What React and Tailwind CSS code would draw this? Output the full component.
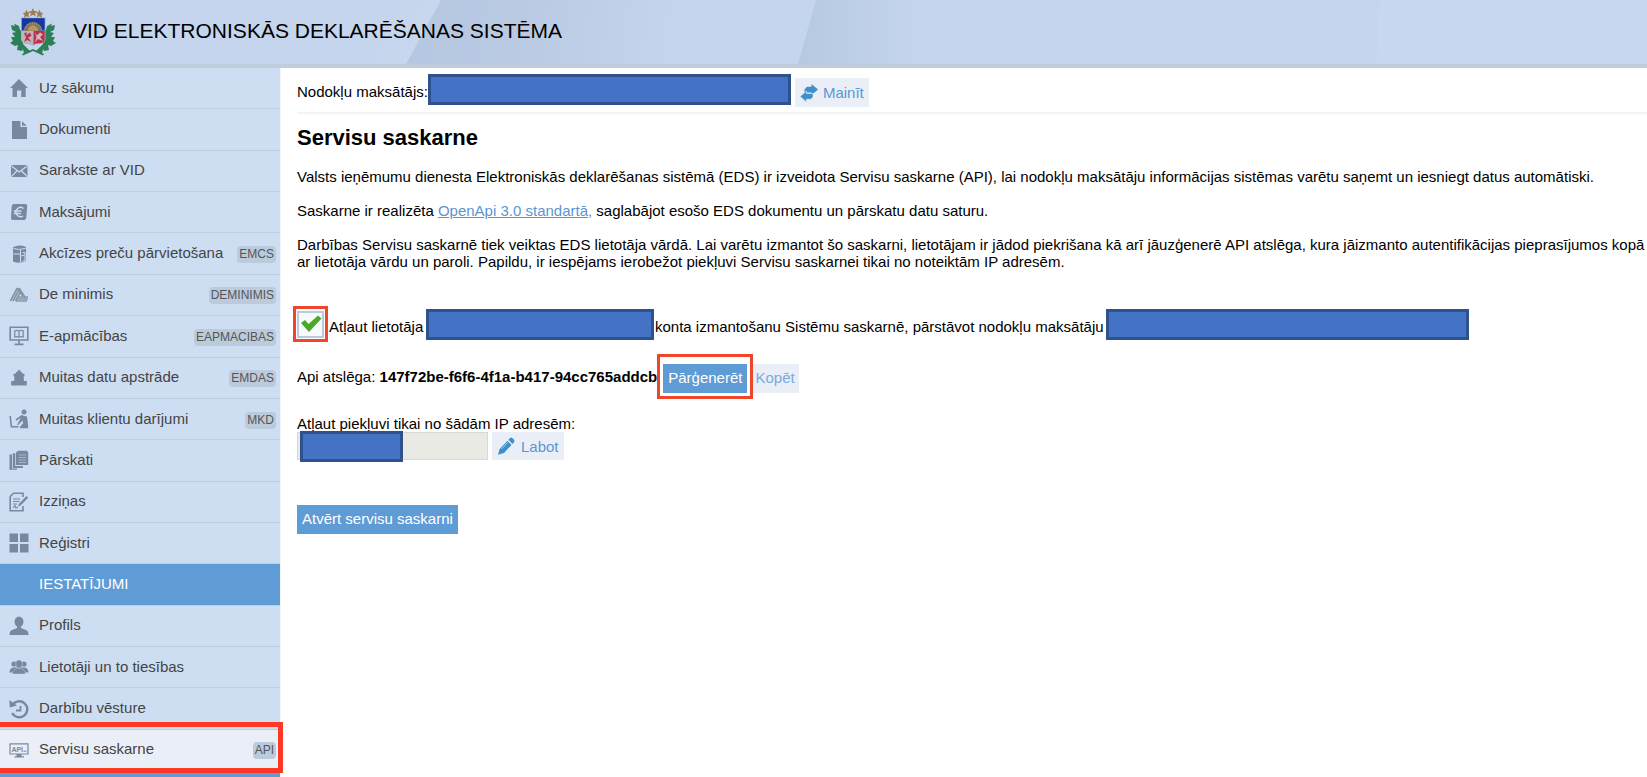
const ICON = '#78899f';

function Icon({ children }) {
  return (
    <svg viewBox="0 0 20 20" className="h-5 w-5 shrink-0" fill={ICON} stroke="none" aria-hidden="true">
      {children}
    </svg>
  );
}

const line = { fill: 'none', stroke: ICON, strokeWidth: 1.6 };
const gap = '#cddef3';

const icons = {
  home: <path d="M10 1 L19 10 H16.7 V19 H12.2 V12.5 H8 V19 H3.5 V10 H1 Z" />,
  doc: (
    <>
      <path d="M3 1 H11.5 V7 H18 V19 H3 Z" />
      <path d="M13 1.2 L17.8 5.8 H13 Z" />
    </>
  ),
  mail: (
    <>
      <rect x="2" y="4" width="16.5" height="12" rx="2" />
      <path d="M3 5.5 L10.2 11 L17.5 5.5 M3 14.8 L7.8 10 M17.5 14.8 L12.6 10" fill="none" stroke={gap} strokeWidth="1.2" />
    </>
  ),
  euro: (
    <>
      <path d="M5 2 H16.5 Q18.5 2 18.2 4 L17.3 15.5 Q17 18 14.8 18 H4 Q1.8 18 2 15.8 L2.7 4 Q3 2 5 2 Z" />
      <path d="M14.5 6.5 A4.6 4.6 0 1 0 14 14 M4.8 9 H12.5 M4.8 11.5 H12" fill="none" stroke={gap} strokeWidth="1.4" />
    </>
  ),
  barrel: (
    <>
      <path d="M4 3.2 Q10 0 17 3 V17.3 Q10 20 4 17.5 Z" />
      <path d="M4.5 4.6 Q10 6.4 16.5 4.4 M4.5 10 H11 M11.5 6 V18.5 M13.5 8.5 H16 V17 H13.5 M12 12 L15.5 11" fill="none" stroke={gap} strokeWidth="1" />
    </>
  ),
  triangle: (
    <g fill="none" stroke="#8996a6" strokeWidth="1.7">
      <path d="M1.5 16 L8 3.5 M4 16 L10 4.5 M6.5 16 L11 7.5 M8 3 L14.5 12 M10 3 L16.5 13 M9 12 H19 M8 14 H19 M7 16 H18" />
    </g>
  ),
  board: (
    <>
      <path d="M1.2 1.2 H18.8 V14 H1.2 Z" {...line} />
      <path d="M10 5 Q7.5 3.8 5.8 4.8 V11 Q8 10.2 10 11.3 Q12 10.2 14.2 11 V4.8 Q12.5 3.8 10 5 V11" fill="none" stroke={ICON} strokeWidth="1.2" />
      <path d="M10 14 V18 M5.5 18.4 H14.5" {...line} />
    </>
  ),
  stamp: (
    <path d="M9 2 H11 V3.3 Q13 3.5 13.5 5.5 L15.5 6 V8 L14.6 8.5 L15 13 H17.8 V17.5 H2.2 V13 H5.2 L5.4 8.5 L4.5 8 V6 L6.5 5.5 Q7 3.5 9 3.3 Z" />
  ),
  desk: (
    <>
      <circle cx="15" cy="3" r="2.5" />
      <path d="M13 6.5 L18 7.5 L19.3 18 H11 L14.2 14 L13.5 11.5 L9 16 H8 Z" />
      <path d="M1.2 7 L2.4 17.8 H9.5 M7 11 L13.5 6.5 M11 18.5 H19" {...line} />
    </>
  ),
  stack: (
    <>
      <path d="M9 .8 H18 L19.2 2.5 V15 H7 V2.5 Z" />
      <path d="M3.8 3.2 H6.3 V16 H14 V18 H3.8 Z M.5 4.6 H3 V18.6 H8 V19.8 H.5 Z" />
      <path d="M9.5 5 H17 M9.5 7.5 H17 M9.5 10 H17 M9.5 12.5 H17" fill="none" stroke={gap} strokeWidth=".5" />
    </>
  ),
  write: (
    <>
      <path d="M14 5 V1.2 H4.5 L1.2 4.5 V18.8 H14 V14" {...line} />
      <path d="M4 7 H11 M4 9.5 H10.5 M4 12 H8 M4 16 L6 13.5 L7 16 L9 15" fill="none" stroke={ICON} strokeWidth="1.1" />
      <path d="M17.5 4 L19.2 5.8 L11.5 13.5 L9.2 14.5 L9.8 12 Z" />
    </>
  ),
  grid: <path d="M.5 .5 H9 V9 H.5 Z M11 .5 H19.5 V9 H11 Z M.5 11 H9 V19.5 H.5 Z M11 11 H19.5 V19.5 H11 Z" />,
  user: (
    <>
      <ellipse cx="10" cy="5.8" rx="4.5" ry="5.3" />
      <path d="M8 10 H12 V12 L17.5 14.3 Q19.5 15.2 19.5 19 H.5 Q.5 15.2 2.5 14.3 L8 12 Z" />
    </>
  ),
  users: (
    <>
      <circle cx="5" cy="7" r="2.6" />
      <circle cx="15" cy="7" r="2.6" />
      <path d="M.5 15.5 Q.5 11.5 4 10.5 H16 Q19.5 11.5 19.5 15.5 Z" />
      <ellipse cx="10" cy="7" rx="3.4" ry="4" stroke={gap} strokeWidth=".4" />
      <path d="M3.5 17 Q3.5 13 8.5 11.5 H11.5 Q16.5 13 16.5 17 Z" stroke={gap} strokeWidth=".4" />
    </>
  ),
  history: (
    <>
      <path d="M3.5 6 A8 8 0 1 1 3.2 14" fill="none" stroke={ICON} strokeWidth="2.4" />
      <path d="M.3 1 L.8 8.5 L8 6.5 Z" />
      <path d="M11.5 7 V11.5 H7" fill="none" stroke={ICON} strokeWidth="1.8" />
    </>
  ),
  api: (
    <>
      <path d="M1 3.8 H19 V14 H1 Z" fill="none" stroke={ICON} strokeWidth="1.2" />
      <path d="M7.5 14 H12.5 V16.2 H15 V17.6 H5.5 V16.2 H7.5 Z" />
      <text x="2.4" y="11.6" fontSize="7" fontWeight="700" fontFamily="Liberation Sans, sans-serif">API</text>
      <path d="M14.5 11.2 H17.5" fill="none" stroke={ICON} strokeWidth="1" />
    </>
  ),
};

const menu = [
  { icon: 'home', label: 'Uz sākumu' },
  { icon: 'doc', label: 'Dokumenti' },
  { icon: 'mail', label: 'Sarakste ar VID' },
  { icon: 'euro', label: 'Maksājumi' },
  { icon: 'barrel', label: 'Akcīzes preču pārvietošana', tag: 'EMCS' },
  { icon: 'triangle', label: 'De minimis', tag: 'DEMINIMIS' },
  { icon: 'board', label: 'E-apmācības', tag: 'EAPMACIBAS' },
  { icon: 'stamp', label: 'Muitas datu apstrāde', tag: 'EMDAS' },
  { icon: 'desk', label: 'Muitas klientu darījumi', tag: 'MKD' },
  { icon: 'stack', label: 'Pārskati' },
  { icon: 'write', label: 'Izziņas' },
  { icon: 'grid', label: 'Reģistri' },
];

const settings = [
  { icon: 'user', label: 'Profils' },
  { icon: 'users', label: 'Lietotāji un to tiesības' },
  { icon: 'history', label: 'Darbību vēsture' },
  { icon: 'api', label: 'Servisu saskarne', tag: 'API', active: true },
];

function MenuItem({ icon, label, tag, active }) {
  return (
    <li className={`relative flex min-h-10 flex-1 border-b border-[#bccddd] ${active ? 'bg-[#eaeff7]' : ''}`}>
      <a href="#" className="flex flex-1 items-center pr-1 pl-[9px] text-[15px] text-[#444]">
        <Icon>{icons[icon]}</Icon>
        <span className="flex-1 pb-0.5 pl-2.5 whitespace-nowrap">{label}</span>
        {tag && (
          <span className="mt-0.5 rounded-sm bg-[#bccbdc] px-0.5 text-xs leading-[17px] text-[#555]">{tag}</span>
        )}
      </a>
      {active && (
        <span className="pointer-events-none absolute -top-2 -right-[3px] -bottom-[3px] -left-[5px] border-[5px] border-[#ff3826]" />
      )}
    </li>
  );
}

function Redacted({ className }) {
  return <span className={`block shrink-0 border-[3px] border-[#2f528f] bg-[#4472c4] ${className}`} />;
}

function Emblem() {
  return (
    <svg viewBox="0 0 46 48" className="h-12 w-[46px] shrink-0" role="img" aria-label="Latvijas ģerbonis">
      <g fill="#2c8058">
        <path d="M1 17 L5 18 L4 15.5 L9 18 L10 22 L13 24 V36 L20 43 L23 42 L26 43 L33 36 V24 L36 22 L37 18 L42 15.5 L41 18 L45 17 L44 22 L40 24 L44 25 L41 29 L45 29 L43 33 L46 35 L41 38 L38 37 L39 42 L34 43 L33 41 L32 46 L27 44 L23 42 L20 44 L14 46 L13 41 L12 43 L7 42 L8 37 L5 38 L0 35 L3 33 L1 29 L5 29 L2 25 L6 24 L2 22 Z" />
        <path d="M12 46 L23 41 L34 46 L33 47.5 L23 43 L13 47.5 Z" />
      </g>
      <path d="M11 9.5 H35.5 V31 Q35 36 29 36 Q25 36 23.2 38 Q21 36 17 36 Q11.5 36 11 31 Z" fill="#a9b0bb" />
      <path d="M11.8 10.2 H34.7 V22.5 H11.8 Z" fill="#1238a8" />
      <path d="M14 22.8 A9 9 0 0 1 32 22.8 Z" fill="#6f6d76" />
      <path d="M14.5 22.8 A8.6 8.6 0 0 1 31.5 22.8" fill="none" stroke="#a88d5a" strokeWidth="2" strokeDasharray="1.2 1" />
      <path d="M17.5 22.8 A5.5 5.5 0 0 1 28.5 22.8 Z" fill="#b8965c" />
      <path d="M11.8 23 H22.8 V36.8 Q21 35.3 17 35.3 Q12.3 35.3 11.8 31 Z" fill="#b9b7c0" />
      <path d="M23.6 23 H34.7 V31 Q34.2 35.3 29 35.3 Q25 35.3 23.6 36.6 Z" fill="#c02f47" />
      <path d="M14 25 L17 24.5 L16 27.5 L20 24.5 L21.5 28 L18 29.5 L21.5 34 L17.5 32 L14 34 L16 29.5 Z" fill="#c02f47" />
      <path d="M25 24.5 L27 27.5 L30 24.5 L33 26.5 L30 29 L33 33 L28 31 L25 34.5 L26.5 29.5 Z" fill="#cbbac4" />
      <g fill="#a07b4d">
        <path d="M23 0 L24.2 3 L27.5 3.2 L25 5.3 L25.9 8.5 L23 6.8 L20.1 8.5 L21 5.3 L18.5 3.2 L21.8 3 Z" />
        <path d="M16.5 1.5 L17.5 4 L20 4.6 L18.4 6.4 L19.2 9.3 L16.7 8.2 L14 10 L14.5 7 L12.8 5 L15.4 4.6 Z" />
        <path d="M29.5 1.5 L28.5 4 L26 4.6 L27.6 6.4 L26.8 9.3 L29.3 8.2 L32 10 L31.5 7 L33.2 5 L30.6 4.6 Z" />
      </g>
    </svg>
  );
}

export default function App() {
  return (
    <div className="flex min-h-screen flex-col overflow-hidden bg-white font-['Liberation_Sans',Arial,sans-serif] text-[15px] leading-[17px] text-black">
      <header className="relative border-b-4 border-[#bfcddc] bg-[#c4d5ed]">
        <svg className="absolute inset-0 h-full w-full" viewBox="0 0 1647 64" preserveAspectRatio="none" aria-hidden="true">
          <defs>
            <linearGradient id="foldA" gradientUnits="userSpaceOnUse" x1="420" y1="0" x2="680" y2="40">
              <stop offset="0" stopColor="#b6c7e1" />
              <stop offset="0.4" stopColor="#bacae3" />
              <stop offset="1" stopColor="#c4d5ed" />
            </linearGradient>
            <linearGradient id="foldB" gradientUnits="userSpaceOnUse" x1="800" y1="0" x2="920" y2="0">
              <stop offset="0" stopColor="#b7c8e1" />
              <stop offset="1" stopColor="#c4d5ed" />
            </linearGradient>
            <linearGradient id="streak" gradientUnits="userSpaceOnUse" x1="390" y1="0" x2="425" y2="16">
              <stop offset="0" stopColor="#c4d5ed" />
              <stop offset="1" stopColor="#c7d7ee" />
            </linearGradient>
          </defs>
          <path d="M405 0 H442 L408 64 H371 Z" fill="url(#streak)" />
          <path d="M441 0 H720 V64 H406 Z" fill="url(#foldA)" />
          <path d="M816 0 H940 V64 H798 Z" fill="url(#foldB)" />
          <path d="M1380 0 H1647 V64 H1376 Z" fill="#c7d8f0" />
        </svg>
        <div className="relative flex h-16 items-center gap-[17px] pl-[10px]">
          <Emblem />
          <span className="pb-1 text-[21px]">VID ELEKTRONISKĀS DEKLARĒŠANAS SISTĒMA</span>
        </div>
      </header>

      <div className="flex flex-1">
        <nav className="flex w-[280px] shrink-0 flex-col bg-[#cddef3]">
          <ul className="flex flex-1 flex-col">
            {menu.map((item) => (
              <MenuItem key={item.label} {...item} />
            ))}
            <li className="flex min-h-10 flex-1 items-center border-b border-[#bccddd] bg-[#5f9bd5] pl-[39px] text-white">
              <span className="pb-0.5">IESTATĪJUMI</span>
            </li>
            {settings.map((item) => (
              <MenuItem key={item.label} {...item} />
            ))}
          </ul>
          <div className="h-1.5 bg-[#5f9bd5]" />
        </nav>

        <main className="min-w-0 flex-1 border-l border-[#f0f4fc] pl-4">
          <div className="flex items-start border-b-2 border-[#f1f4f9] pt-1.5 pb-[5px]">
            <span className="pt-[9px] whitespace-nowrap">Nodokļu maksātājs:</span>
            <Redacted className="h-[31px] w-[363px]" />
            <button className="mt-1 ml-1 flex h-[29px] items-center gap-[5px] bg-[#eaeff7] px-[5px] text-[#5b96d2]">
              <svg viewBox="0 0 18 18" className="h-[18px] w-[18px]" fill="#3f8fcb" aria-hidden="true">
                <path d="M11.5 0 L18 5.5 L11.5 11 V8.5 H4.5 V5.5 L7 2.8 H11.5 Z" />
                <path d="M6.5 7 L0 12.5 L6.5 18 V15.2 H11 L13 13 V9.5 H6.5 Z" stroke="#eaeff7" strokeWidth=".6" />
              </svg>
              Mainīt
            </button>
          </div>

          <h1 className="mt-[11px] text-[22px] leading-[25px] font-bold">Servisu saskarne</h1>
          <div className="mt-[18px] flex flex-col gap-[17px]">
            <p>
              Valsts ieņēmumu dienesta Elektroniskās deklarēšanas sistēmā (EDS) ir izveidota Servisu saskarne (API), lai nodokļu maksātāju informācijas sistēmas varētu saņemt un iesniegt datus automātiski.
            </p>
            <p>
              Saskarne ir realizēta <a href="#" className="text-[#5b96d2]"><span className="underline">OpenApi 3.0 standartā</span>,</a> saglabājot esošo EDS dokumentu un pārskatu datu saturu.
            </p>
            <p>
              Darbības Servisu saskarnē tiek veiktas EDS lietotāja vārdā. Lai varētu izmantot šo saskarni, lietotājam ir jādod piekrišana kā arī jāuzģenerē API atslēga, kura jāizmanto autentifikācijas pieprasījumos kopā ar lietotāja vārdu un paroli. Papildu, ir iespējams ierobežot piekļuvi Servisu saskarnei tikai no noteiktām IP adresēm.
            </p>
          </div>

          <div className="mt-9 flex items-center">
            <label htmlFor="allow" className="flex items-center whitespace-nowrap">
              <span className="relative -ml-1 flex h-9 w-[35px] items-center justify-center border-[3px] border-[#ef452b]">
                <input id="allow" type="checkbox" defaultChecked className="h-[27px] w-[27px] appearance-none border-2 border-[#bccbdc] bg-[#f7fafc]" />
                <svg viewBox="0 0 22 18" className="pointer-events-none absolute h-[18px] w-[22px]" fill="#4ea72a" aria-hidden="true">
                  <path d="M1 8 L5 5 L8.5 9 L18 0.5 L21.5 3.5 L9 17 Z" />
                </svg>
              </span>
              <span className="w-[98px] pt-1 pl-px">Atļaut lietotāja</span>
            </label>
            <Redacted className="h-[31px] w-[228px]" />
            <span className="pt-1 pr-0.5 pl-px whitespace-nowrap">konta izmantošanu Sistēmu saskarnē, pārstāvot nodokļu maksātāju</span>
            <Redacted className="h-[31px] w-[363px]" />
          </div>

          <div className="mt-3 flex items-center">
            <span className="whitespace-nowrap">Api atslēga: <b>147f72be-f6f6-4f1a-b417-94cc765addcb</b></span>
            <span className="flex border-[3px] border-[#ef452b] px-[3px] pt-[7px] pb-[3px]">
              <button className="h-[29px] bg-[#5f9bd5] px-[5px] pb-0.5 text-white">Pārģenerēt</button>
            </span>
            <button className="mt-1 h-[29px] bg-[#eaeff7] pr-1 pb-0.5 pl-0.5 text-[#7ba9dc]">Kopēt</button>
          </div>

          <label htmlFor="ips" className="mt-4 block">Atļaut piekļuvi tikai no šādām IP adresēm:</label>
          <div className="flex items-center gap-1">
            <div className="relative">
              <input id="ips" type="text" readOnly className="block h-7 w-[191px] border border-[#d9d9d4] bg-[#eaeae4]" />
              <span className="absolute -top-px left-[3px]"><Redacted className="h-[31px] w-[103px]" /></span>
            </div>
            <button className="flex h-7 items-center gap-1.5 bg-[#eaeff7] px-[5px] text-[#5b96d2]">
              <svg viewBox="0 0 18 18" className="h-[18px] w-[18px]" fill="#3f8fcb" aria-hidden="true">
                <path d="M10.5 3.8 L14.5 8 L7 16 L1 17.8 L2.6 12 Z" />
                <path d="M11.5 2.8 L13 1 Q14.2 0 15.5 1.2 L17 2.8 Q18 4 17 5.2 L15.4 7 Z" />
                <path d="M4.5 12 L10.8 5.3" stroke="#a9cdea" strokeWidth="1" />
              </svg>
              Labot
            </button>
          </div>

          <button className="mt-[45px] h-[29px] bg-[#5f9bd5] px-[5px] pb-0.5 text-white">Atvērt servisu saskarni</button>
        </main>
      </div>
    </div>
  );
}
